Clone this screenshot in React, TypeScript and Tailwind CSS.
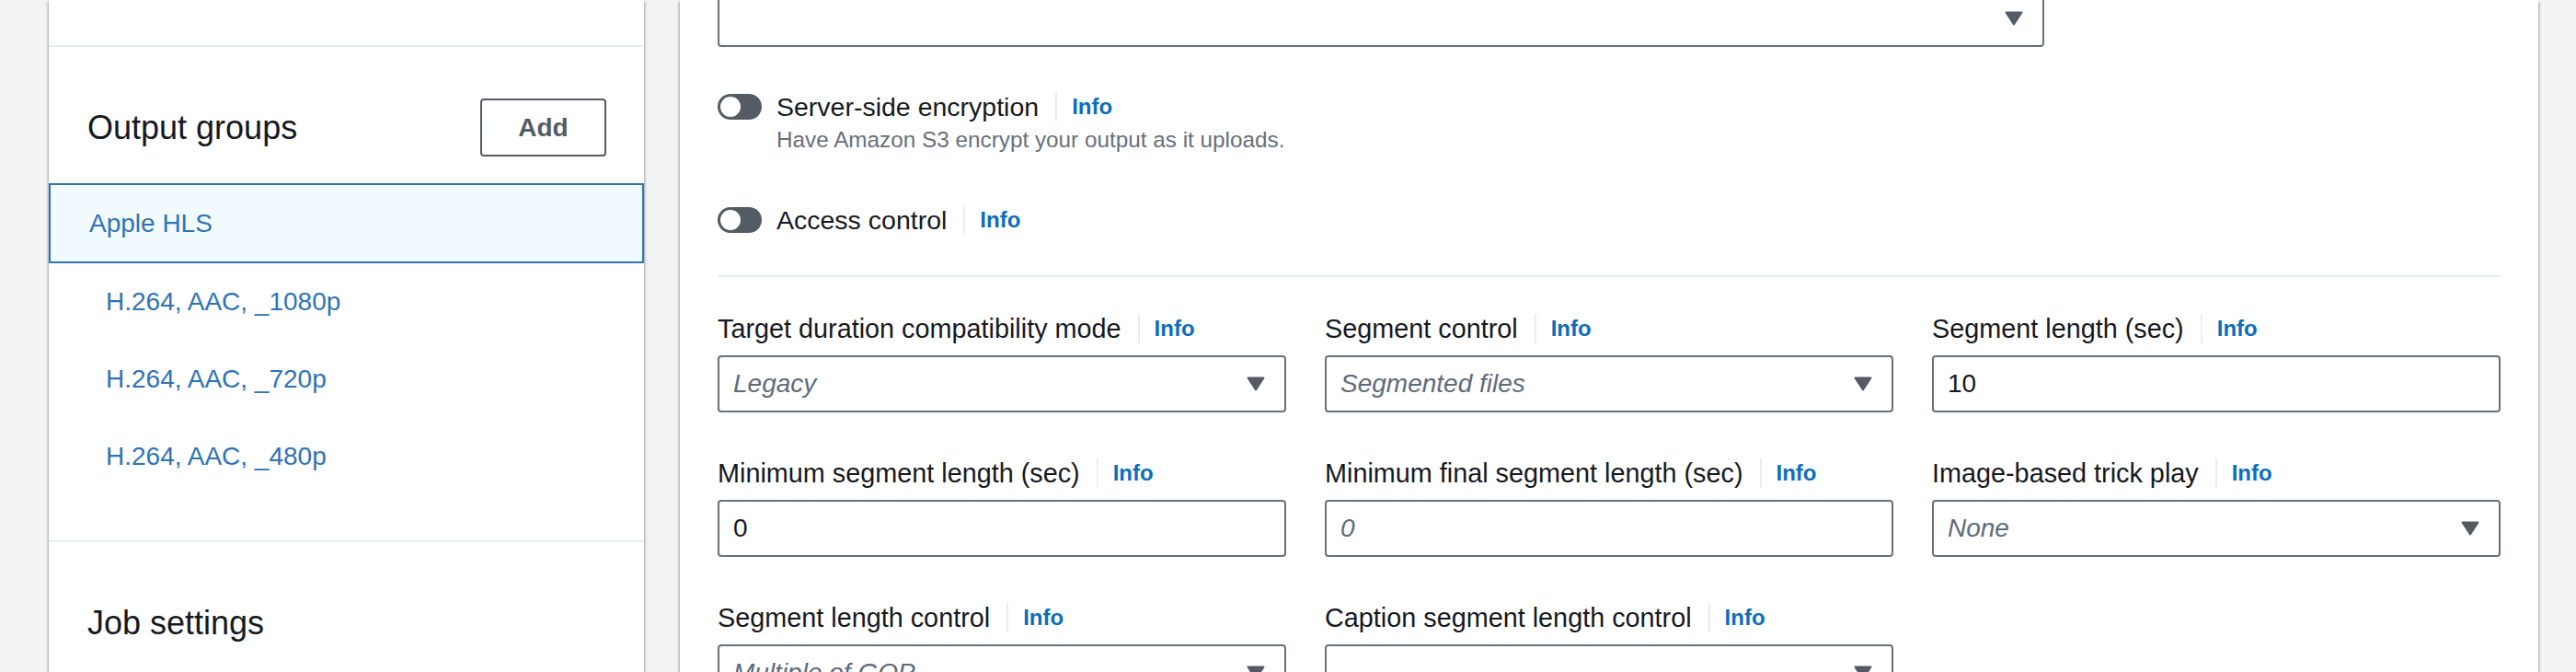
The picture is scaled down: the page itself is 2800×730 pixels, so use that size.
import React from "react";

const BORDER = "border-2 border-[#687078] rounded-[4px]";

function Caret() {
    return (
        <svg width="20" height="16" viewBox="0 0 20 16" className="shrink-0">
            <path d="M1.5 1.5 H18.5 L10 14.5 Z" fill="#545b64" stroke="#545b64" strokeWidth="2" strokeLinejoin="round" />
        </svg>
    );
}

function InfoLink() {
    return (
        <>
            <span className="ml-[18px] h-[32px] w-[2px] bg-[#eaeded]" />
            <span className="ml-[16px] text-[24px] font-bold text-[#0b6ebb]">Info</span>
        </>
    );
}

function Toggle() {
    return (
        <div className="mt-[6px] flex h-[28px] w-[48px] shrink-0 items-center rounded-full bg-[#545b64] pl-[3px]">
            <div className="h-[22px] w-[22px] rounded-full bg-white" />
        </div>
    );
}

interface FieldProps {
    label: string;
    value?: string;
    placeholder?: string;
    select?: boolean;
}

function Field({ label, value, placeholder, select }: FieldProps) {
    return (
        <div>
            <div className="flex h-[40px] items-center text-[28.8px] leading-[40px]">
                <span>{label}</span>
                <InfoLink />
            </div>
            <div className={`mt-[9px] flex h-[62px] items-center justify-between pl-[15px] pr-[21px] ${BORDER}`}>
                {value ? (
                    <span className="text-[28px] text-[#16191f]">{value}</span>
                ) : (
                    <span className="text-[28px] italic text-[#5f6b7a]">{placeholder}</span>
                )}
                {select && <Caret />}
            </div>
        </div>
    );
}

const panelShadow = "shadow-[0_2px_2px_0_rgba(0,28,36,0.3),2px_2px_2px_0_rgba(0,28,36,0.15),-2px_2px_2px_0_rgba(0,28,36,0.15)]";

export default function App() {
    const outputs = ["H.264, AAC, _1080p", "H.264, AAC, _720p", "H.264, AAC, _480p"];

    return (
        <div className="flex h-[730px] w-[2800px] overflow-hidden bg-[#f2f3f3] font-['Liberation_Sans',Arial,sans-serif] text-[#16191f]">
            {/* Left navigation panel */}
            <aside className={`ml-[53px] flex h-full w-[647px] shrink-0 flex-col bg-white ${panelShadow}`}>
                <div className="h-[51px] shrink-0 border-b-2 border-[#eaeded]" />
                <div className="mt-[56px] flex items-center justify-between pl-[42px] pr-[41px]">
                    <h2 className="text-[36px] leading-[44px]">Output groups</h2>
                    <button className="h-[63px] w-[137px] rounded-[4px] border-2 border-[#545b64] text-[28px] font-bold text-[#545b64]">
                        Add
                    </button>
                </div>
                <div className="mt-[29px] flex h-[87px] shrink-0 items-center border-2 border-[#2e73b8] bg-[#f1faff] pl-[42px] text-[28px] text-[#2e73b8]">
                    Apple HLS
                </div>
                {outputs.map(o => (
                    <div key={o} className="flex h-[84px] shrink-0 items-center pl-[62px] text-[28px] text-[#2e73b8]">
                        {o}
                    </div>
                ))}
                <div className="mt-[49px] shrink-0 border-t-2 border-[#eaeded]" />
                <div className="mt-[56px] flex h-[63px] shrink-0 items-center pl-[42px]">
                    <h2 className="text-[36px] leading-[44px]">Job settings</h2>
                </div>
            </aside>

            {/* Main settings panel */}
            <main className={`ml-[39px] h-full w-[2020px] shrink-0 bg-white pl-[41px] ${panelShadow}`}>
                <div className={`-mt-[11px] flex h-[62px] w-[1442px] items-center justify-end pr-[21px] ${BORDER}`}>
                    <Caret />
                </div>

                <div className="mt-[45px] flex">
                    <Toggle />
                    <div className="ml-[16px]">
                        <div className="flex h-[40px] items-center text-[28.5px] leading-[40px]">
                            <span>Server-side encryption</span>
                            <InfoLink />
                        </div>
                        <div className="text-[24.3px] leading-[32px] text-[#687078]">
                            Have Amazon S3 encrypt your output as it uploads.
                        </div>
                    </div>
                </div>

                <div className="mt-[51px] flex">
                    <Toggle />
                    <div className="ml-[16px] flex h-[40px] items-center text-[28.5px] leading-[40px]">
                        <span>Access control</span>
                        <InfoLink />
                    </div>
                </div>

                <div className="mt-[40px] h-[2px] w-[1938px] bg-[#eaeded]" />

                <div className="mt-[36px] grid w-[1938px] grid-cols-3 gap-x-[42px] gap-y-[46px]">
                    <Field label="Target duration compatibility mode" placeholder="Legacy" select />
                    <Field label="Segment control" placeholder="Segmented files" select />
                    <Field label="Segment length (sec)" value="10" />
                    <Field label="Minimum segment length (sec)" value="0" />
                    <Field label="Minimum final segment length (sec)" placeholder="0" />
                    <Field label="Image-based trick play" placeholder="None" select />
                    <Field label="Segment length control" placeholder="Multiple of GOP" select />
                    <Field label="Caption segment length control" placeholder="" select />
                </div>
            </main>
        </div>
    );
}
